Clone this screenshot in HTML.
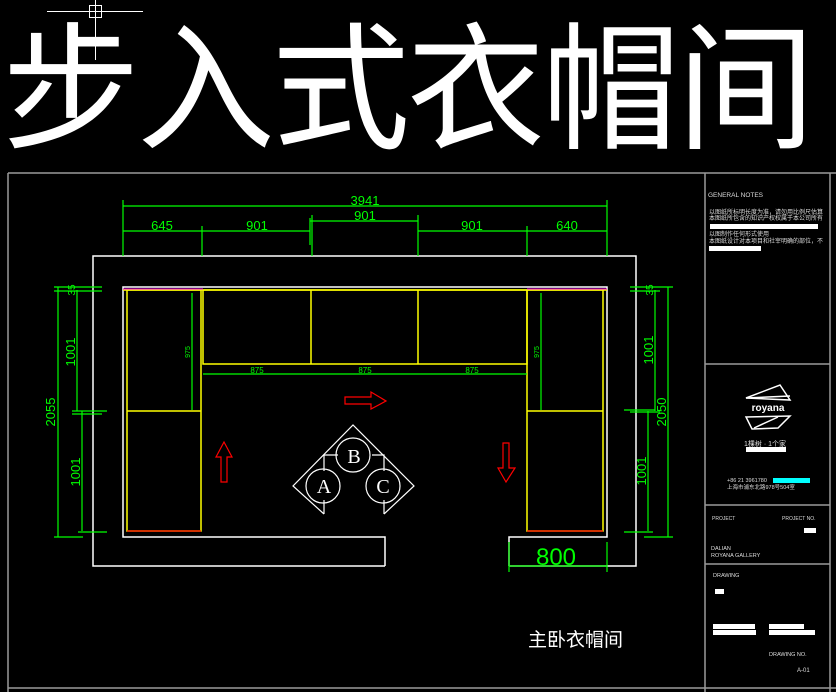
<!DOCTYPE html>
<html><head><meta charset="utf-8"><style>
html,body{margin:0;padding:0;background:#000;width:836px;height:692px;overflow:hidden}
svg{display:block}
</style></head><body>
<svg width="836" height="692" viewBox="0 0 836 692" xmlns="http://www.w3.org/2000/svg" font-family="Liberation Sans, sans-serif">
<rect width="836" height="692" fill="#000"/>
<!-- title -->
<g fill="#fff" font-family="Noto Sans CJK SC, WenQuanYi Zen Hei, sans-serif" font-size="138">
<text x="2" y="138">步</text><text x="137" y="138">入</text><text x="272" y="138">式</text><text x="407" y="138">衣</text><text x="542" y="138">帽</text><text x="677" y="138">间</text>
</g>
<!-- cursor -->
<g stroke="#fff" stroke-width="1" fill="none">
<line x1="47" y1="11.5" x2="143" y2="11.5"/><line x1="95.5" y1="0" x2="95.5" y2="60"/>
<rect x="89.5" y="5.5" width="12" height="12"/>
</g>
<!-- frame -->
<g stroke="#9a9a9a" stroke-width="1.5" fill="none">
<line x1="8" y1="173" x2="836" y2="173"/>
<line x1="8" y1="173" x2="8" y2="692"/>
<line x1="705" y1="173" x2="705" y2="692"/>
<line x1="830" y1="173" x2="830" y2="692"/>
<line x1="705" y1="364" x2="830" y2="364"/>
<line x1="705" y1="505" x2="830" y2="505"/>
<line x1="705" y1="564" x2="830" y2="564"/>
<line x1="8" y1="688" x2="836" y2="688"/>
</g>
<!-- room walls -->
<g stroke="#fff" stroke-width="1.5" fill="none">
<polyline points="385,566 93,566 93,256 636,256 636,566 509,566"/>
<polyline points="385,566 385,537 123,537 123,287 607,287 607,537 509,537 509,566"/>
</g>
<!-- cabinets -->
<g stroke="#ffff00" stroke-width="1.5" fill="none">
<line x1="123" y1="290" x2="607" y2="290"/>
<rect x="127" y="290" width="74" height="241"/>
<line x1="127" y1="411" x2="201" y2="411"/>
<rect x="203" y="290" width="324" height="74"/>
<line x1="311" y1="290" x2="311" y2="364"/><line x1="418" y1="290" x2="418" y2="364"/>
<rect x="527" y="290" width="76" height="241"/>
<line x1="527" y1="411" x2="603" y2="411"/>
</g>
<g stroke="#ff0000" stroke-width="1.2"><line x1="127" y1="531" x2="201" y2="531"/><line x1="527" y1="531" x2="603" y2="531"/></g>
<line x1="123" y1="289" x2="203" y2="289" stroke="#ff00ff" stroke-width="1"/>
<line x1="527" y1="289" x2="607" y2="289" stroke="#ff00ff" stroke-width="1"/>
<!-- dims -->
<g stroke="#00ff00" stroke-width="1.2" fill="none">
<line x1="123" y1="206" x2="607" y2="206"/>
<line x1="123" y1="231" x2="310" y2="231"/><line x1="418" y1="231" x2="607" y2="231"/>
<line x1="310" y1="221" x2="418" y2="221"/>
<line x1="123" y1="200" x2="123" y2="256"/><line x1="607" y1="200" x2="607" y2="256"/>
<line x1="202" y1="226" x2="202" y2="256"/><line x1="310" y1="218" x2="310" y2="245"/><line x1="312" y1="215" x2="312" y2="256"/>
<line x1="418" y1="215" x2="418" y2="256"/><line x1="527" y1="226" x2="527" y2="256"/>
<line x1="203" y1="374" x2="527" y2="374"/>
<line x1="192" y1="293" x2="192" y2="410"/><line x1="541" y1="293" x2="541" y2="410"/>
<line x1="58" y1="287" x2="58" y2="537"/><line x1="77" y1="290" x2="77" y2="411"/><line x1="82" y1="411" x2="82" y2="531"/>
<line x1="54" y1="287" x2="102" y2="287"/><line x1="54" y1="291" x2="102" y2="291"/>
<line x1="72" y1="411" x2="107" y2="411"/><line x1="72" y1="414" x2="102" y2="414"/>
<line x1="54" y1="537" x2="83" y2="537"/><line x1="78" y1="532" x2="107" y2="532"/>
<line x1="668" y1="287" x2="668" y2="537"/><line x1="655" y1="290" x2="655" y2="411"/><line x1="648" y1="411" x2="648" y2="531"/>
<line x1="630" y1="287" x2="673" y2="287"/><line x1="630" y1="291" x2="660" y2="291"/>
<line x1="624" y1="410" x2="655" y2="410"/><line x1="630" y1="412" x2="660" y2="412"/>
<line x1="624" y1="532" x2="653" y2="532"/><line x1="644" y1="537" x2="673" y2="537"/>
<line x1="509" y1="566" x2="607" y2="566"/>
<line x1="509" y1="542" x2="509" y2="572"/><line x1="607" y1="542" x2="607" y2="572"/>
</g>
<g fill="#00ff00" font-size="13" text-anchor="middle">
<text x="365" y="205">3941</text>
<text x="162" y="230">645</text><text x="257" y="230">901</text><text x="365" y="220">901</text>
<text x="472" y="230">901</text><text x="567" y="230">640</text>
<text x="556" y="565" font-size="24">800</text>
<g font-size="8"><text x="257" y="373">875</text><text x="365" y="373">875</text><text x="472" y="373">875</text></g>
<text transform="translate(75,352) rotate(-90)">1001</text>
<text transform="translate(80,472) rotate(-90)">1001</text>
<text transform="translate(55,412) rotate(-90)">2055</text>
<text transform="translate(653,350) rotate(-90)">1001</text>
<text transform="translate(646,471) rotate(-90)">1001</text>
<text transform="translate(666,412) rotate(-90)">2050</text>
<text transform="translate(75,290) rotate(-90)" font-size="10">35</text>
<text transform="translate(653,290) rotate(-90)" font-size="10">35</text>
<text transform="translate(190,352) rotate(-90)" font-size="7">975</text>
<text transform="translate(539,352) rotate(-90)" font-size="7">975</text>
</g>
<!-- arrows -->
<g stroke="#ff0000" stroke-width="1.2" fill="none">
<polygon points="345,397 371,397 371,392 386,401 371,409 371,404 345,404"/>
<polygon points="221,482 221,457 216,457 224,442 232,457 227,457 227,482"/>
<polygon points="503,443 503,468 498,468 506,482 515,468 509,468 509,443"/>
</g>
<!-- diamond -->
<g stroke="#fff" stroke-width="1.2" fill="none">
<polyline points="324,514 293,486 353,425 414,486 384,514"/>
<line x1="324" y1="514" x2="324" y2="500"/><line x1="384" y1="514" x2="384" y2="500"/>
<polyline points="324,471 324,455 338,455"/><polyline points="384,471 384,455 372,455"/>
<circle cx="353" cy="455" r="17"/><circle cx="323" cy="486" r="17"/><circle cx="383" cy="486" r="17"/>
</g>
<g fill="#fff" font-family="Liberation Serif, serif" font-size="20" text-anchor="middle">
<text x="354" y="463">B</text><text x="324" y="493">A</text><text x="383" y="493">C</text>
</g>
<text x="528" y="646" fill="#fff" font-size="19" font-family="Liberation Sans, Noto Sans CJK SC, sans-serif">主卧衣帽间</text>
<!-- right panel -->
<g fill="#ddd" font-size="6.5" font-family="Liberation Sans, Noto Sans CJK SC, sans-serif">
<text x="708" y="197">GENERAL NOTES</text>
<text x="709" y="214" font-size="6">以图纸所标明长度为准，请勿用比例尺估算</text>
<text x="709" y="220" font-size="6">本图纸所包含的知识产权权属于本公司所有</text>
<text x="709" y="236" font-size="6">以图制作任何形式使用</text>
<text x="709" y="243" font-size="6">本图纸设计对本项目和社宰明确的部位，不</text>
<text x="744" y="446" font-size="7">1棵树 · 1个家</text>
<text x="727" y="482" font-size="5.5">+86 21 3961780</text>
<text x="727" y="489" font-size="5.5">上海市浦东北路978号504室</text>
<text x="712" y="520" font-size="5">PROJECT</text><text x="782" y="520" font-size="5">PROJECT NO.</text>
<text x="711" y="550" font-size="5.5">DALIAN</text><text x="711" y="557" font-size="5.5">ROYANA GALLERY</text>
<text x="713" y="577" font-size="5.5">DRAWING</text>
<text x="769" y="656" font-size="5.5">DRAWING NO.</text>
<text x="797" y="672" font-size="6">A-01</text>
</g>
<g fill="#fff">
<rect x="710" y="224" width="108" height="5"/><rect x="709" y="246" width="52" height="5"/>
<rect x="746" y="447" width="40" height="5"/>
<rect x="773" y="478" width="37" height="5" fill="#00ffff"/>
<rect x="804" y="528" width="12" height="5"/>
<rect x="715" y="589" width="9" height="5"/>
<rect x="713" y="624" width="42" height="5"/><rect x="713" y="630" width="43" height="5"/>
<rect x="769" y="624" width="35" height="5"/><rect x="769" y="630" width="46" height="5"/>
</g>
<g stroke="#fff" stroke-width="1.5" fill="none">
<polygon points="746,398 780,385 790,400"/><line x1="746" y1="398" x2="790" y2="396"/>
<polygon points="746,417 790,416 778,428 752,429"/><line x1="754" y1="428" x2="778" y2="417"/>
</g>
<text x="768" y="411" fill="#fff" font-size="10" font-weight="bold" text-anchor="middle">royana</text>
</svg>
</body></html>
